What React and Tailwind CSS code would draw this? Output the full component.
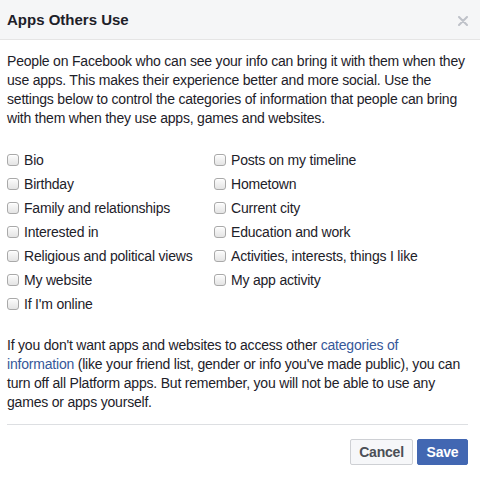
import React from 'react';

const leftItems = [
  'Bio',
  'Birthday',
  'Family and relationships',
  'Interested in',
  'Religious and political views',
  'My website',
  "If I'm online",
];

const rightItems = [
  'Posts on my timeline',
  'Hometown',
  'Current city',
  'Education and work',
  'Activities, interests, things I like',
  'My app activity',
];

function Check({ label }) {
  return (
    <label className="flex items-center h-6 cursor-pointer">
      <span className="w-[12px] h-[12px] rounded-[3px] border border-[#a9a9a9] bg-gradient-to-b from-[#fcfcfc] to-[#e4e4e4] shadow-[inset_0_1px_0_#fff]" />
      <span className="ml-[5px] whitespace-nowrap">{label}</span>
    </label>
  );
}

export default function App() {
  return (
    <div
      className="w-[480px] h-[477px] bg-white text-[#1d2129] text-[14px] tracking-[-0.2px] overflow-hidden"
      style={{ fontFamily: '"Liberation Sans", Arial, sans-serif' }}
    >
      {/* header */}
      <div className="h-[40px] bg-[#f5f6f7] border-b border-[#e5e5e5] flex items-center justify-between pl-[7px] pr-[12px]">
        <h1 className="text-[15px] font-bold leading-none tracking-normal">Apps Others Use</h1>
        <svg width="10" height="10" viewBox="0 0 10 10" className="mt-[2px]">
          <path d="M1 1 L9 9 M9 1 L1 9" stroke="#bec2c9" strokeWidth="2" strokeLinecap="round" />
        </svg>
      </div>

      <div className="pl-[7px] pr-[12px] pt-[12px]">
        <p className="leading-[19px]">
          People on Facebook who can see your info can bring it with them when they use apps. This makes their
          experience better and more social. Use the settings below to control the categories of information that
          people can bring with them when they use apps, games and websites.
        </p>

        <div className="grid grid-cols-[207px_1fr] mt-[20px]">
          <div className="flex flex-col">
            {leftItems.map((l) => (
              <Check key={l} label={l} />
            ))}
          </div>
          <div className="flex flex-col">
            {rightItems.map((l) => (
              <Check key={l} label={l} />
            ))}
          </div>
        </div>

        <p className="leading-[19px] mt-[20px]">
          If you don't want apps and websites to access other{' '}
          <a href="#" className="text-[#365899]">categories of information</a> (like your friend list, gender or
          info you've made public), you can turn off all Platform apps. But remember, you will not be able to use
          any games or apps yourself.
        </p>

        <div className="border-t border-[#dddfe2] mt-[12px]" />

        <div className="flex justify-end gap-[4px] mt-[14px]">
          <button className="h-[26px] w-[63px] rounded-[2px] border border-[#ced0d4] bg-[#f6f7f9] text-[#4b4f56] font-bold text-[14px]">
            Cancel
          </button>
          <button className="h-[26px] w-[51px] rounded-[2px] border border-[#4267b2] bg-[#4267b2] text-white font-bold text-[14px]">
            Save
          </button>
        </div>
      </div>
    </div>
  );
}
